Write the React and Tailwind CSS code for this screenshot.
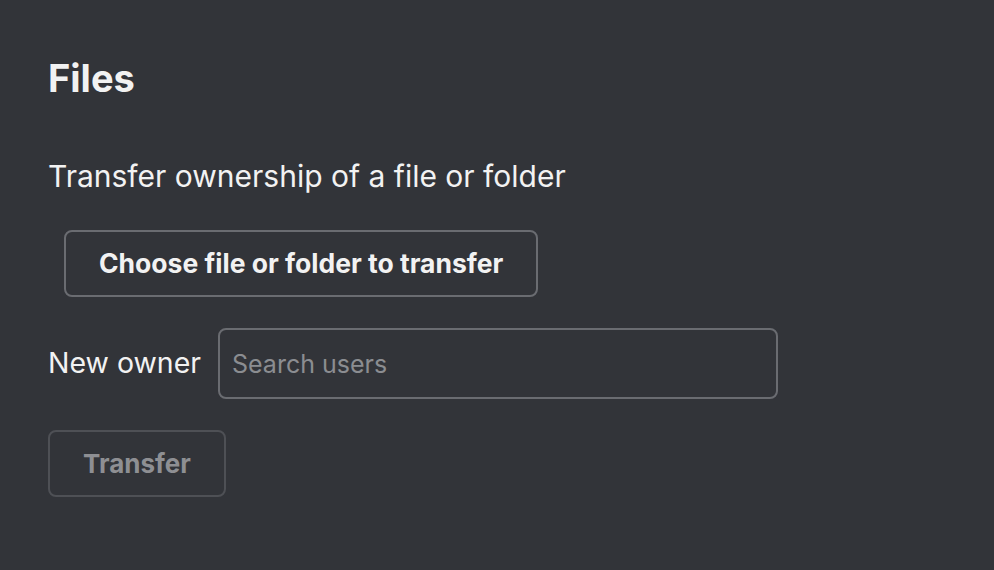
export default function App() {
  return (
    <div
      className="min-h-screen w-full bg-[#323439] text-[#f2f2f2] px-12 pt-[52px]"
      style={{ fontFamily: 'Inter, "Noto Sans", sans-serif' }}
    >
      <h2 className="text-[38px] font-bold leading-[52px]">Files</h2>

      <p className="mt-[52px] text-[30px] leading-[40px]">Transfer ownership of a file or folder</p>

      <div className="mt-[34px] pl-4">
        <button
          type="button"
          className="h-[67px] px-[33px] rounded-lg border-2 border-[#6a6c71] text-[26.5px] font-bold text-[#f2f2f2]"
        >
          Choose file or folder to transfer
        </button>
      </div>

      <div className="mt-[31px] flex items-center gap-[17px]">
        <label className="text-[28.5px]">New owner</label>
        <input
          type="text"
          placeholder="Search users"
          className="h-[71px] w-[560px] rounded-lg border-2 border-[#6a6c71] bg-transparent px-3 text-[25px] text-[#f2f2f2] placeholder:text-[#8b8d91] outline-none"
        />
      </div>

      <button
        type="button"
        disabled
        className="mt-[31px] h-[67px] w-[178px] rounded-lg border-2 border-[#4e5055] text-[26px] font-bold text-[#8e8f93]"
      >
        Transfer
      </button>
    </div>
  )
}
